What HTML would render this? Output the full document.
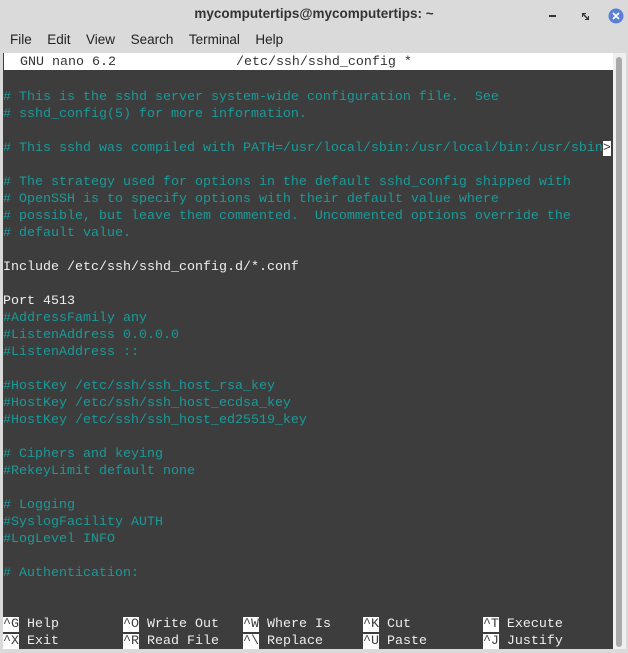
<!DOCTYPE html>
<html><head><meta charset="utf-8"><style>
*{margin:0;padding:0;box-sizing:border-box}
body{width:628px;height:653px;background:#dadada;position:relative;overflow:hidden;font-family:"Liberation Sans","DejaVu Sans",sans-serif}
.title{position:absolute;top:0;left:0;width:628px;height:28px;text-align:center;line-height:28px;font-size:13.5px;font-weight:bold;color:#333}
.menu{position:absolute;top:28px;left:10px;height:24px;line-height:24px;font-size:13.5px;color:#222}
.menu span{margin-right:15.5px}
.term{position:absolute;left:3px;top:53px;width:610px;height:596px;padding-top:2px;background:#3d3d3d;font-family:"Liberation Mono","DejaVu Sans Mono",monospace;font-size:13.33px;line-height:17px;color:#eee;overflow:hidden}
.row{height:17px;position:relative;white-space:pre}
.hd{background:#fff;color:#333;margin-left:1px;margin-top:-2px;height:17px;padding-top:1px;margin-bottom:2px}
.c{color:#1a9a9a}
.inv{background:#fff;color:#3d3d3d}
.sb{position:absolute;left:613px;top:53px;width:13px;height:596px;background:#efefef}
.th{position:absolute;left:616px;top:57px;width:6px;height:590px;background:#aaa;border-radius:3px}
.btn{position:absolute}
</style></head><body>
<div class="title">mycomputertips@mycomputertips: ~</div>
<svg class="btn" style="left:545px;top:8px" width="80" height="16">
<rect x="4" y="7" width="7" height="2" fill="#333"/>
<path d="M37 5h4v1h-3v3h-1zM44 12h-4v-1h3v-3h1z" fill="#333"/>
<path d="M38 6l5 5" stroke="#333" stroke-width="1.5"/>
<circle cx="71" cy="8" r="7.5" fill="#5b7fd9"/>
<path d="M68 5l6 6M74 5l-6 6" stroke="#fff" stroke-width="1.8"/>
</svg>
<div class="menu"><span>File</span><span>Edit</span><span>View</span><span>Search</span><span>Terminal</span><span>Help</span></div>
<div class="term"><div class="row hd">  GNU nano 6.2               /etc/ssh/sshd_config *                        </div><div class="row"></div><div class="row c"># This is the sshd server system-wide configuration file.  See</div><div class="row c"># sshd_config(5) for more information.</div><div class="row"></div><div class="row c"># This sshd was compiled with PATH=/usr/local/sbin:/usr/local/bin:/usr/sbin<span class="inv">&gt;</span></div><div class="row"></div><div class="row c"># The strategy used for options in the default sshd_config shipped with</div><div class="row c"># OpenSSH is to specify options with their default value where</div><div class="row c"># possible, but leave them commented.  Uncommented options override the</div><div class="row c"># default value.</div><div class="row"></div><div class="row">Include /etc/ssh/sshd_config.d/*.conf</div><div class="row"></div><div class="row">Port 4513</div><div class="row c">#AddressFamily any</div><div class="row c">#ListenAddress 0.0.0.0</div><div class="row c">#ListenAddress ::</div><div class="row"></div><div class="row c">#HostKey /etc/ssh/ssh_host_rsa_key</div><div class="row c">#HostKey /etc/ssh/ssh_host_ecdsa_key</div><div class="row c">#HostKey /etc/ssh/ssh_host_ed25519_key</div><div class="row"></div><div class="row c"># Ciphers and keying</div><div class="row c">#RekeyLimit default none</div><div class="row"></div><div class="row c"># Logging</div><div class="row c">#SyslogFacility AUTH</div><div class="row c">#LogLevel INFO</div><div class="row"></div><div class="row c"># Authentication:</div><div class="row"></div><div class="row"></div><div class="row"><span class="inv">^G</span> Help        <span class="inv">^O</span> Write Out   <span class="inv">^W</span> Where Is    <span class="inv">^K</span> Cut         <span class="inv">^T</span> Execute</div><div class="row"><span class="inv">^X</span> Exit        <span class="inv">^R</span> Read File   <span class="inv">^\</span> Replace     <span class="inv">^U</span> Paste       <span class="inv">^J</span> Justify</div></div>
<div class="sb"></div><div class="th"></div>
</body></html>
